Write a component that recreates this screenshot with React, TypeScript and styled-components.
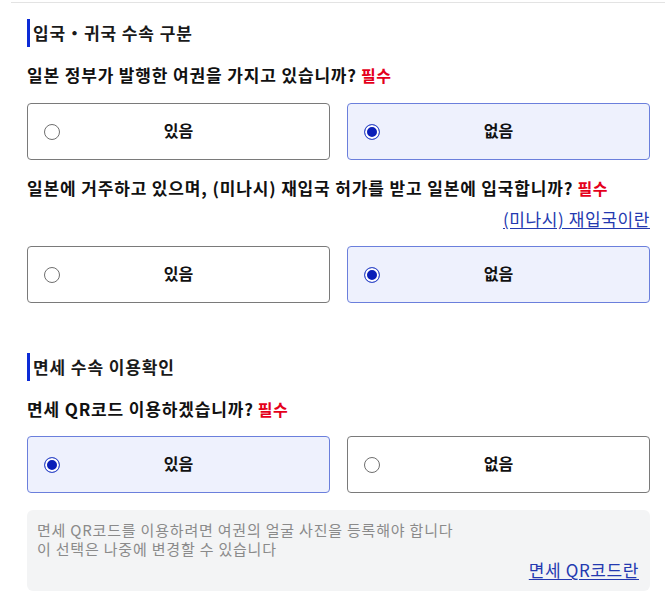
import { createGlobalStyle, styled } from "styled-components";

const GlobalStyle = createGlobalStyle`
  body {
    margin: 0;
    background: #fff;
    font-family: "Noto Sans CJK KR", "Noto Sans", sans-serif;
    color: #111;
  }
`;

const Page = styled.div`
  margin-left: 11px;
  margin-top: 2px;
  border-top: 1px solid #e3e3e3;
  padding: 0 15px 0 16px;
`;

const Section = styled.section<{ $top: number }>`
  margin-top: ${(p) => p.$top}px;
  display: flex;
  flex-direction: column;
`;

const Heading = styled.h2`
  margin: 0;
  height: 28px;
  line-height: 28px;
  border-left: 3px solid #0c2bd6;
  padding-left: 3px;
  font-size: 17px;
  letter-spacing: 0.9px;
  font-weight: 700;
  color: #1a1a1a;
`;

const Question = styled.p<{ $top: number }>`
  margin: ${(p) => p.$top}px 0 0;
  line-height: 22px;
  font-size: 17px;
  letter-spacing: 0.85px;
  font-weight: 700;
  color: #111;
`;

const Required = styled.span`
  color: #e4001b;
  font-size: 16px;
  letter-spacing: 0.5px;
  margin-left: 4px;
`;

const LinkRow = styled.div<{ $top: number }>`
  margin-top: ${(p) => p.$top}px;
  display: flex;
  justify-content: flex-end;
  line-height: 22px;
`;

const TextLink = styled.a`
  color: #2439b0;
  font-size: 17px;
  letter-spacing: 0.6px;
  text-decoration: underline;
  text-underline-offset: 2px;
  cursor: pointer;
`;

const Options = styled.div<{ $top: number }>`
  margin-top: ${(p) => p.$top}px;
  display: grid;
  grid-template-columns: 1fr 1fr;
  gap: 17px;
`;

const Option = styled.label<{ $checked: boolean }>`
  position: relative;
  display: flex;
  align-items: center;
  justify-content: center;
  height: 57px;
  padding-bottom: 4px;
  box-sizing: border-box;
  border: 1px solid ${(p) => (p.$checked ? "#6b7fdc" : "#7a7a7a")};
  border-radius: 4px;
  background: ${(p) => (p.$checked ? "#eef1fd" : "#fff")};
  font-size: 16px;
  font-weight: 700;
  color: #111;
  cursor: pointer;
`;

const Radio = styled.span<{ $checked: boolean }>`
  position: absolute;
  left: 16px;
  top: 50%;
  transform: translateY(-50%);
  width: 16px;
  height: 16px;
  box-sizing: border-box;
  border-radius: 50%;
  border: 1px solid ${(p) => (p.$checked ? "#3a52cc" : "#6f6f6f")};
  background: ${(p) => (p.$checked ? "#0a1fb8" : "#fff")};
  box-shadow: ${(p) => (p.$checked ? "inset 0 0 0 2px #fff" : "none")};
`;

const Note = styled.div`
  margin-top: 17px;
  background: #f3f4f5;
  border-radius: 6px;
  padding: 10px 11px 11px 10px;
  display: flex;
  flex-direction: column;
`;

const NoteText = styled.p`
  margin: 0;
  font-size: 15px;
  letter-spacing: 0.8px;
  line-height: 19px;
  color: #8a8a8a;
`;

const NoteLink = styled.div`
  margin-top: 2px;
  display: flex;
  justify-content: flex-end;
  line-height: 20px;
`;

type Choice = { label: string; checked: boolean };

const Choices = ({ items, top }: { items: Choice[]; top: number }) => (
  <Options $top={top}>
    {items.map((c) => (
      <Option key={c.label} $checked={c.checked}>
        <Radio $checked={c.checked} />
        {c.label}
      </Option>
    ))}
  </Options>
);

export default function App() {
  return (
    <>
      <GlobalStyle />
      <Page>
        <Section $top={16}>
          <Heading>입국・귀국 수속 구분</Heading>
          <Question $top={17}>
            일본 정부가 발행한 여권을 가지고 있습니까?<Required>필수</Required>
          </Question>
          <Choices
            top={17}
            items={[
              { label: "있음", checked: false },
              { label: "없음", checked: true },
            ]}
          />
          <Question $top={17}>
            일본에 거주하고 있으며, (미나시) 재입국 허가를 받고 일본에 입국합니까?
            <Required>필수</Required>
          </Question>
          <LinkRow $top={9}>
            <TextLink>(미나시) 재입국이란</TextLink>
          </LinkRow>
          <Choices
            top={16}
            items={[
              { label: "있음", checked: false },
              { label: "없음", checked: true },
            ]}
          />
        </Section>
        <Section $top={50}>
          <Heading>면세 수속 이용확인</Heading>
          <Question $top={17}>
            면세 QR코드 이용하겠습니까?<Required>필수</Required>
          </Question>
          <Choices
            top={16}
            items={[
              { label: "있음", checked: true },
              { label: "없음", checked: false },
            ]}
          />
          <Note>
            <NoteText>면세 QR코드를 이용하려면 여권의 얼굴 사진을 등록해야 합니다</NoteText>
            <NoteText>이 선택은 나중에 변경할 수 있습니다</NoteText>
            <NoteLink>
              <TextLink>면세 QR코드란</TextLink>
            </NoteLink>
          </Note>
        </Section>
      </Page>
    </>
  );
}
